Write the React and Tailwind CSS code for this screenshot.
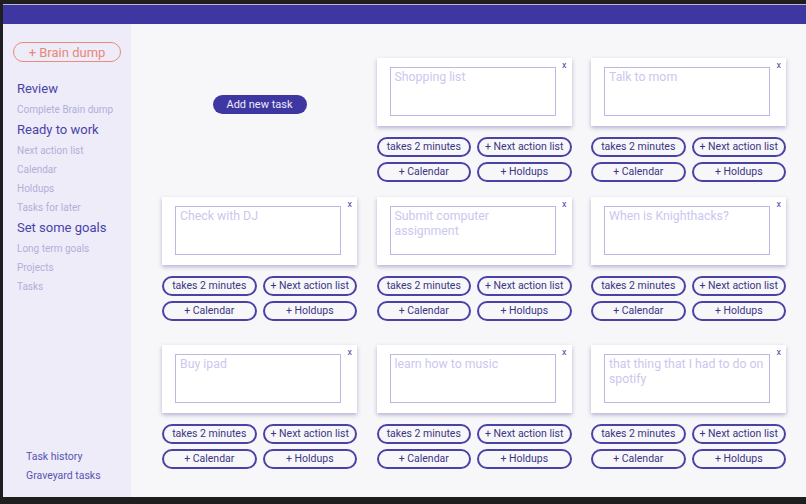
import React from "react";

const tasks = [
  null,
  "Shopping list",
  "Talk to mom",
  "Check with DJ",
  "Submit computer assignment",
  "When is Knighthacks?",
  "Buy ipad",
  "learn how to music",
  "that thing that I had to do on spotify",
];

function Pill({ children }) {
  return (
    <button className="h-[20px] rounded-full border-2 border-[#4a42a6] bg-transparent text-[10.5px] leading-none text-[#3b3585] flex items-center justify-center">
      {children}
    </button>
  );
}

function TaskCell({ text }) {
  return (
    <div className="flex flex-col">
      <div className="relative h-[68px] bg-white shadow-[0_2px_4px_rgba(60,50,140,0.35)] pl-[13px] pr-[16px] pt-[9px] pb-[10px]">
        <div className="h-full border border-[#bcb7e3] pl-[4px] pr-[2px] pt-[2px] text-[12.3px] leading-[15px] text-[#cbc7ee]">
          {text}
        </div>
        <span className="absolute right-[5px] top-[1px] text-[9px] text-[#5048aa]">x</span>
      </div>
      <div className="mt-[11px] grid grid-cols-2 gap-x-[6px] gap-y-[5px]">
        <Pill>takes 2 minutes</Pill>
        <Pill>+ Next action list</Pill>
        <Pill>+ Calendar</Pill>
        <Pill>+ Holdups</Pill>
      </div>
    </div>
  );
}

export default function App() {
  const head = "h-[22px] flex items-center text-[13px] text-[#4a43a8]";
  const sub = "h-[19px] flex items-center text-[10px] text-[#b3afda]";
  return (
    <div
      className="w-[806px] h-[504px] bg-[#1e1e1e] pt-[4px] pl-[3px] pb-[7px] flex flex-col overflow-hidden"
      style={{ fontFamily: "Roboto, 'Noto Sans', sans-serif" }}
    >
      <div className="flex-1 flex flex-col border-t border-[#b9b7c9] min-h-0">
        <div className="h-[19px] bg-[#3f37a1] shrink-0" />
        <div className="flex-1 flex min-h-0">
          <aside className="w-[128px] bg-[#edecf8] flex flex-col">
            <div className="pl-[10px] pt-[18px]">
              <button className="w-[108px] h-[20px] rounded-full border-[1.5px] border-[#eb8a7d] text-[13px] leading-none text-[#e8887a] flex items-center justify-center">
                + Brain dump
              </button>
            </div>
            <div className="pl-[14px] mt-[16px] flex flex-col">
              <div className={head}>Review</div>
              <div className={sub}>Complete Brain dump</div>
              <div className={head}>Ready to work</div>
              <div className={sub}>Next action list</div>
              <div className={sub}>Calendar</div>
              <div className={sub}>Holdups</div>
              <div className={sub}>Tasks for later</div>
              <div className={head}>Set some goals</div>
              <div className={sub}>Long term goals</div>
              <div className={sub}>Projects</div>
              <div className={sub}>Tasks</div>
            </div>
            <div className="mt-auto pl-[23px] pb-[12px] flex flex-col">
              <div className="h-[19px] flex items-center text-[10.5px] text-[#5a53b2]">Task history</div>
              <div className="h-[19px] flex items-center text-[10.5px] text-[#5a53b2]">Graveyard tasks</div>
            </div>
          </aside>
          <main className="flex-1 bg-[#f7f7f9] pl-[31px] pt-[34px]">
            <div className="grid grid-cols-[195px_195px_195px] grid-rows-[139px_148px_auto] gap-x-[19.5px]">
              {tasks.map((t, i) =>
                t === null ? (
                  <div key={i} className="flex justify-center">
                    <button className="mt-[37px] w-[94px] h-[19px] rounded-full bg-[#3f37a1] text-[11px] leading-none text-[#ecebfa] flex items-center justify-center">
                      Add new task
                    </button>
                  </div>
                ) : (
                  <TaskCell key={i} text={t} />
                )
              )}
            </div>
          </main>
        </div>
      </div>
    </div>
  );
}
